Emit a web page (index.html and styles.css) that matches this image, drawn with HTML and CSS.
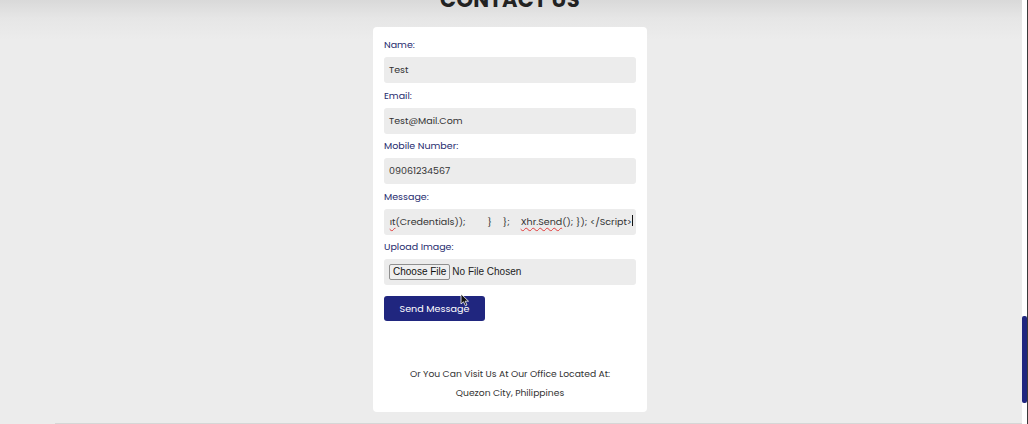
FILE: index.html
```html
<!DOCTYPE html>
<html>
<head>
<meta charset="utf-8">
<link rel="stylesheet" href="styles.css">
</head>
<body>
<main class="page">
  <h1 class="title">CONTACT US</h1>
  <form class="card">
    <label class="lbl">Name:</label>
    <div class="field">Test</div>
    <label class="lbl">Email:</label>
    <div class="field">Test@Mail.Com</div>
    <label class="lbl">Mobile Number:</label>
    <div class="field">09061234567</div>
    <label class="lbl">Message:</label>
    <div class="field msg"><span class="scroll"><span class="typo">ıt</span>(Credentials));&#160;&#160;&#160;&#160;&#160;&#160;&#160;&#160;}&#160;&#160;&#160;&#160;};&#160;&#160;&#160;&#160;<span class="typo">Xhr.Send</span>(); }); &lt;/Script&gt;<span class="caret"></span></span></div>
    <label class="lbl">Upload Image:</label>
    <div class="field file"><span class="choose">Choose File</span><span class="nofile">No File Chosen</span></div>
    <button type="button" class="send">Send Message</button>
    <p class="visit">Or You Can Visit Us At Our Office Located At:<br>Quezon City, Philippines</p>
  </form>
  <div class="next"></div>
</main>
<div class="scrollbar"><div class="thumb"></div></div>
<svg class="pointer" width="10" height="14" viewBox="0 0 10 14"><path d="M1 1 L1 11 L3.5 8.8 L5.4 12.8 L7 12 L5.2 8.2 L8.5 8.2 Z" fill="#111" stroke="#fff" stroke-width="0.8"/></svg>
</body>
</html>
```
FILE: styles.css
```css
html, body {
  margin: 0;
  height: 100%;
  overflow: hidden;
}
body {
  background: linear-gradient(#d9d9d9 0px, #e6e6e6 18px, #ececec 40px, #ececec 100%);
  font-family: "Poppins", "Inter", "Lato", sans-serif;
  color: #333;
}
.page {
  width: 1020px;
  display: flex;
  flex-direction: column;
  align-items: center;
}
.title {
  margin: -12px 0 15px 0;
  height: 24px;
  font-family: "Poppins", "Liberation Sans", sans-serif;
  font-weight: 700;
  font-size: 21px;
  line-height: 24px;
  letter-spacing: 0.3px;
  color: #222;
}
.card {
  width: 274px;
  box-sizing: border-box;
  background: #fff;
  border-radius: 4px;
  padding: 10px 11px 10.5px 11px;
  display: flex;
  flex-direction: column;
}
.lbl {
  display: block;
  font-size: 9.5px;
  line-height: 15px;
  color: #262b6e;
  margin-bottom: 5px;
}
.field {
  height: 26px;
  background: #ececec;
  border-radius: 3px;
  margin-bottom: 4.5px;
  font-size: 9.5px;
  line-height: 26px;
  padding: 0 5px;
  color: #333;
  white-space: nowrap;
  overflow: hidden;
}
.msg {
  display: flex;
  justify-content: flex-end;
  padding-right: 3px;
}
.scroll {
  white-space: pre;
  word-spacing: 0.2px;
}
.typo {
  text-decoration: underline wavy #e23a3a;
  text-decoration-thickness: 0.8px;
  text-underline-offset: 2px;
}
.caret {
  display: inline-block;
  width: 1px;
  height: 11px;
  background: #111;
  vertical-align: -1px;
}
.file {
  display: flex;
  align-items: center;
  padding-left: 5px;
  margin-bottom: 11px;
}
.choose {
  font-family: "Liberation Sans", Arial, sans-serif;
  font-size: 10px;
  line-height: 14px;
  padding: 0 3px;
  border: 1px solid #8f8f8f;
  border-radius: 2px;
  background: #efefef;
  color: #111;
  margin-right: 2px;
}
.nofile {
  font-family: "Liberation Sans", Arial, sans-serif;
  font-size: 10px;
  color: #222;
}
.send {
  align-self: flex-start;
  width: 101px;
  height: 25px;
  border: none;
  border-radius: 3px;
  background: #20267f;
  color: #fff;
  font-family: inherit;
  font-size: 9.6px;
  padding: 0;
  margin: 0;
}
.visit {
  margin: 42.5px 0 0 0;
  text-align: center;
  font-size: 9.2px;
  line-height: 19px;
  color: #333;
}
.next {
  align-self: stretch;
  margin: 11px 0 0 55px;
  height: 10px;
  border-top: 1px solid #d6d6d6;
  margin-right: -8px;
}
.scrollbar {
  position: fixed;
  top: 0;
  right: 0;
  width: 6px;
  height: 424px;
  background: #fff;
  border-right: 1px solid #3a3a3a;
  box-sizing: border-box;
}
.thumb {
  margin-top: 316px;
  height: 87px;
  background: #20267f;
  border-radius: 2px;
}
.pointer {
  position: fixed;
  left: 460px;
  top: 293px;
}
```
